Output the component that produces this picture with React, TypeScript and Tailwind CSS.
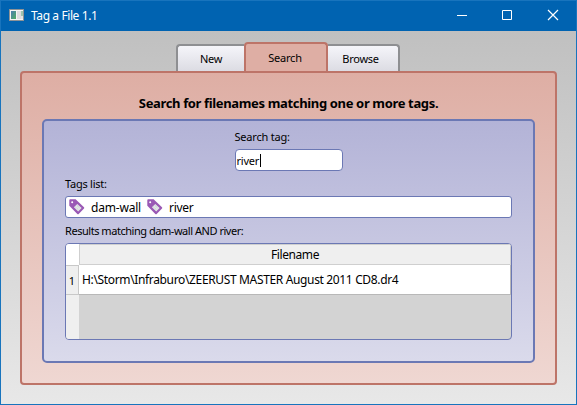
import React from "react";

const ui = "font-['Noto_Sans','Open_Sans',sans-serif]";

function AppIcon() {
  return (
    <svg width="15" height="12" viewBox="0 0 15 12" shapeRendering="crispEdges" className="mb-0.5">
      <defs>
        <linearGradient id="shot" x1="0" y1="0" x2="1" y2="1">
          <stop offset="0" stopColor="#4b7db0" />
          <stop offset="1" stopColor="#4fae62" />
        </linearGradient>
      </defs>
      <rect width="15" height="12" fill="#8d9296" />
      <rect x="1" y="1" width="13" height="10" fill="#f4f4f4" />
      <rect x="2" y="2" width="5" height="8" fill="url(#shot)" />
      <rect x="8" y="2" width="4" height="8" fill="#dcdcdf" />
      <rect x="12" y="2" width="2" height="5" fill="#9cc4b0" />
      <rect x="12" y="7" width="2" height="3" fill="#e4e4e4" />
    </svg>
  );
}

function TagIcon() {
  return (
    <svg width="16" height="16" viewBox="0 0 16 16" className="shrink-0">
      <path
        fillRule="evenodd"
        fill="#9a59b5"
        d="M0.3 1.2Q0.3 0.3 1.2 0.3H6.6L15 8.2Q15.6 8.9 15 9.5L9.7 14.9Q9 15.5 8.3 14.9L0.3 6.8ZM3.2 2.2A1 1 0 1 0 3.2 4.2A1 1 0 1 0 3.2 2.2Z"
      />
      <path fill="#e4e7e8" d="M8.3 4.9L12.6 9.1L9.2 12.5L4.9 8.3Z" />
      <path d="M7.9 6.4L11.1 9.4M6.4 7.9L9.6 10.9" stroke="#bcc3c7" strokeWidth="0.9" strokeDasharray="1.2 0.8" />
    </svg>
  );
}

function TitleBar() {
  return (
    <header className="flex h-[30px] shrink-0 items-center bg-[#0063b1] pl-2 text-white">
      <AppIcon />
      <h1 className="ml-[7px] flex-1 text-[12px] leading-4 font-normal tracking-[-0.4px]">Tag a File 1.1</h1>
      <svg width="119" height="12" viewBox="0 0 119 12" fill="none" stroke="#fff" strokeWidth="1" className="mb-0.5">
        <path d="M0 6.5H10" />
        <path d="M45.5 1.5h9v9h-9z" />
        <path d="M91 1L101 11M101 1L91 11" strokeWidth="1.2" />
      </svg>
    </header>
  );
}

function Tabs() {
  const side =
    "flex h-[27px] items-center justify-center border-t-2 border-[#8e8f92] bg-linear-to-b from-[#f5f5fa] to-[#dcdce3] pt-px";
  return (
    <nav className="flex items-end pl-[175px] text-[11px] leading-4 text-black">
      <div className={`${side} w-[68px] rounded-tl-[4px] border-l-2`}>
        <span className="tracking-[-0.25px]">New</span>
      </div>
      <div className="relative z-10 flex h-[29px] w-[84px] items-center justify-center rounded-t-[4px] border-2 border-b-0 border-[#bd7468] bg-[#deaea4] pt-px pr-[2px]">
        <span className="tracking-[-0.2px]">Search</span>
      </div>
      <div className={`${side} w-[72px] rounded-tr-[4px] border-r-2 pr-[5px]`}>
        <span className="tracking-[-0.25px]">Browse</span>
      </div>
    </nav>
  );
}

function Results() {
  return (
    <div className="grid h-[97px] grid-cols-[13px_1fr] grid-rows-[21px_30px_1fr] overflow-hidden rounded-[4px] border border-[#6b78b4] bg-[#d3d3d3] text-[12px]">
      <div className="bg-white" />
      <div className="flex items-center justify-center border border-[#cfcfcf] bg-[#efefef] leading-4">
        <span className="tracking-[-0.4px]">Filename</span>
      </div>
      <div className="flex items-center justify-center border border-l-0 border-[#c8c8c8] bg-[#efefef] pt-[2px] text-[11px]">1</div>
      <div className="flex items-center border-r border-b border-[#b8b8b8] bg-white pl-[3px] whitespace-nowrap">
        <span className="tracking-[-0.35px]">H:\Storm\Infraburo\ZEERUST MASTER August 2011 CD8.dr4</span>
      </div>
      <div className="bg-[#efefef]" />
    </div>
  );
}

export default function App() {
  return (
    <div className={`flex h-[405px] w-[577px] flex-col overflow-hidden border border-[#1874bd] bg-[#0063b1] ${ui}`}>
      <TitleBar />
      <main className="flex-1 bg-linear-to-b from-[#c0c0c0] to-[#e8e8e8] pt-[11px] text-black">
        <Tabs />
        <section className="mx-[19px] h-[314px] rounded-[4px] border-2 border-[#bd7468] bg-linear-to-b from-[#deaea4] to-[#efd7d2] px-5 pt-5">
          <h2 className="h-[26px] text-center text-[13px] leading-[20px] font-bold tracking-[-0.35px] whitespace-nowrap">
            Search for filenames matching one or more tags.
          </h2>
          <div className="h-[244px] rounded-[5px] border-2 border-[#6b78b4] bg-linear-to-b from-[#b3b3d7] to-[#dadaeb] px-[21px] pt-2 text-[11px] leading-4">
            <div className="mx-auto w-[108px]">
              <label className="block tracking-[-0.2px]">Search tag:</label>
              <div className="mt-1 flex h-[22px] items-center rounded-[4px] border border-[#6b78b4] bg-white pt-px pl-px">
                <span className="tracking-[-0.25px]">river</span>
                <span className="ml-px h-[13px] w-px bg-black" />
              </div>
            </div>
            <p className="mt-[5px] h-[20px] tracking-[-0.25px]">Tags list:</p>
            <div className="flex h-[22px] items-center rounded-[3px] border border-[#6b78b4] bg-white pl-[3px] text-[12px]">
              <TagIcon />
              <span className="ml-[6px] w-[56px] pt-px tracking-[-0.2px]">dam-wall</span>
              <TagIcon />
              <span className="ml-[6px] pt-px tracking-[-0.3px]">river</span>
            </div>
            <p className="mt-[5px] h-[20px] tracking-[-0.46px]">Results matching dam-wall AND river:</p>
            <Results />
          </div>
        </section>
      </main>
    </div>
  );
}
